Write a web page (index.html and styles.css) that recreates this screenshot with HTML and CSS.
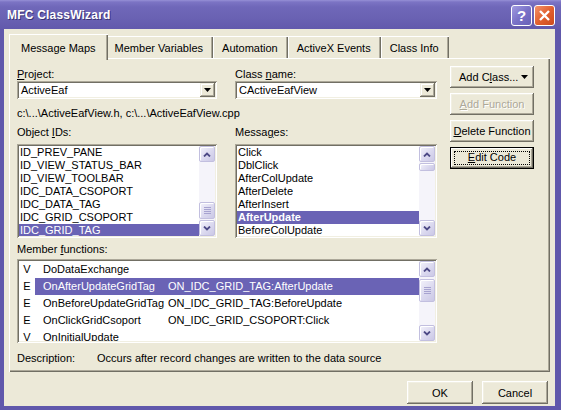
FILE: index.html
```html
<!DOCTYPE html>
<html lang="en">
  <head>
    <meta charset="UTF-8" />
    <title>MFC ClassWizard</title>
    <link rel="stylesheet" href="styles.css">
  </head>
  <body>
    <div class="window">
      <div class="titlebar">
        <span class="title">MFC ClassWizard</span>
        <span class="cap-btns">
          <span class="cap help">?</span>
          <span class="cap close">
            <svg width="21" height="21" viewBox="0 0 21 21"><path d="M6 6 15 15M15 6 6 15" /></svg>
          </span>
        </span>
      </div>

      <div class="frame">
        <div class="client">
          <div class="tabs">
            <span class="tab active">Message Maps</span>
            <span class="tab">Member Variables</span>
            <span class="tab">Automation</span>
            <span class="tab">ActiveX Events</span>
            <span class="tab">Class Info</span>
          </div>

          <div class="panel">
            <div class="main">
              <div class="pair">
                <div>
                  <div class="lbl"><u>P</u>roject:</div>
                  <div class="combo">
                    <span class="combo-text">ActiveEaf</span>
                    <span class="drop"><svg width="7" height="4" viewBox="0 0 7 4"><path d="M0 0h7L3.5 4z" /></svg></span>
                  </div>
                </div>
                <div>
                  <div class="lbl">Class <u>n</u>ame:</div>
                  <div class="combo">
                    <span class="combo-text">CActiveEafView</span>
                    <span class="drop"><svg width="7" height="4" viewBox="0 0 7 4"><path d="M0 0h7L3.5 4z" /></svg></span>
                  </div>
                </div>
              </div>

              <div class="path">c:\...\ActiveEafView.h, c:\...\ActiveEafView.cpp</div>

              <div class="pair lists">
                <div>
                  <div class="lbl">Object <u>I</u>Ds:</div>
                  <div class="listbox">
                    <ul class="items">
                      <li>ID_PREV_PANE</li>
                      <li>ID_VIEW_STATUS_BAR</li>
                      <li>ID_VIEW_TOOLBAR</li>
                      <li>IDC_DATA_CSOPORT</li>
                      <li>IDC_DATA_TAG</li>
                      <li>IDC_GRID_CSOPORT</li>
                      <li class="sel">IDC_GRID_TAG</li>
                    </ul>
                    <div class="vscroll">
                      <span class="sbtn"><svg width="8" height="5" viewBox="0 0 8 5"><path d="M1 4.5 4 1.5 7 4.5" /></svg></span>
                      <span class="track"><span class="thumb grip" style="margin-top:40px;height:17px"></span></span>
                      <span class="sbtn"><svg width="8" height="5" viewBox="0 0 8 5"><path d="M1 0.5 4 3.5 7 0.5" /></svg></span>
                    </div>
                  </div>
                </div>
                <div>
                  <div class="lbl">Messa<u>g</u>es:</div>
                  <div class="listbox">
                    <ul class="items">
                      <li>Click</li>
                      <li>DblClick</li>
                      <li>AfterColUpdate</li>
                      <li>AfterDelete</li>
                      <li>AfterInsert</li>
                      <li class="sel bold">AfterUpdate</li>
                      <li>BeforeColUpdate</li>
                    </ul>
                    <div class="vscroll">
                      <span class="sbtn"><svg width="8" height="5" viewBox="0 0 8 5"><path d="M1 4.5 4 1.5 7 4.5" /></svg></span>
                      <span class="track"><span class="thumb" style="margin-top:1px;height:8px"></span></span>
                      <span class="sbtn"><svg width="8" height="5" viewBox="0 0 8 5"><path d="M1 0.5 4 3.5 7 0.5" /></svg></span>
                    </div>
                  </div>
                </div>
              </div>

              <div class="lbl members-lbl">Member <u>f</u>unctions:</div>
              <div class="listbox members">
                <ul class="items">
                  <li><span class="kind">V</span><span class="fn">DoDataExchange</span><span class="msg"></span></li>
                  <li class="sel"><span class="kind">E</span><span class="fn">OnAfterUpdateGridTag</span><span class="msg">ON_IDC_GRID_TAG:AfterUpdate</span></li>
                  <li><span class="kind">E</span><span class="fn">OnBeforeUpdateGridTag</span><span class="msg">ON_IDC_GRID_TAG:BeforeUpdate</span></li>
                  <li><span class="kind">E</span><span class="fn">OnClickGridCsoport</span><span class="msg">ON_IDC_GRID_CSOPORT:Click</span></li>
                  <li><span class="kind">V</span><span class="fn">OnInitialUpdate</span><span class="msg"></span></li>
                </ul>
                <div class="vscroll">
                  <span class="sbtn"><svg width="8" height="5" viewBox="0 0 8 5"><path d="M1 4.5 4 1.5 7 4.5" /></svg></span>
                  <span class="track"><span class="thumb grip" style="margin-top:2px;height:23px"></span></span>
                  <span class="sbtn"><svg width="8" height="5" viewBox="0 0 8 5"><path d="M1 0.5 4 3.5 7 0.5" /></svg></span>
                </div>
              </div>

              <div class="desc">
                <span class="desc-lbl">Description:</span>
                <span>Occurs after record changes are written to the data source</span>
              </div>
            </div>

            <div class="side">
              <button class="btn addclass"><span>Add C<u>l</u>ass...</span><svg width="7" height="4" viewBox="0 0 7 4"><path d="M0 0h7L3.5 4z" /></svg></button>
              <button class="btn" disabled><u>A</u>dd Function</button>
              <button class="btn"><u>D</u>elete Function</button>
              <button class="btn default"><span class="focus"><u>E</u>dit Code</span></button>
            </div>
          </div>

          <div class="footer">
            <button class="btn wide">OK</button>
            <button class="btn wide">Cancel</button>
          </div>
        </div>
      </div>
    </div>
  </body>
</html>
```

FILE: styles.css
```css
body {
  margin: 0;
  background: #ffffff;
  font-family: "Liberation Sans", Arial, sans-serif;
  font-size: 11px;
  color: #000000;
}

.window {
  width: 561px;
  height: 410px;
  background: #6058ab;
  display: flex;
  flex-direction: column;
}

/* title bar */
.titlebar {
  height: 29px;
  flex: none;
  display: flex;
  align-items: center;
  justify-content: space-between;
  padding: 0 6px 0 7px;
  background: linear-gradient(to bottom, #9690d6 0, #7c74c4 2px, #6f67b9 7px, #6a62b3 60%, #6259ac 100%);
}
.title {
  color: #ffffff;
  font-weight: bold;
  font-size: 12px;
  text-shadow: 1px 1px #3b3474;
  letter-spacing: 0.2px;
}
.cap-btns {
  display: flex;
  gap: 2px;
  margin-top: 1px;
}
.cap {
  width: 19px;
  height: 19px;
  border: 1px solid #ffffff;
  border-radius: 3px;
  display: flex;
  align-items: center;
  justify-content: center;
  color: #ffffff;
  font: bold 15px "Liberation Sans", Arial, sans-serif;
}
.help {
  background: linear-gradient(135deg, #a19be0, #7a72c8 50%, #6961b7);
}
.close {
  background: linear-gradient(135deg, #f3936c, #e2602f 50%, #cc4a1c);
}
.close svg {
  margin: -1px;
}
.close path {
  stroke: #ffffff;
  stroke-width: 2.4;
  fill: none;
}

/* frame and client area */
.frame {
  flex: 1;
  padding: 0 6px 4px 4px;
  display: flex;
}
.client {
  flex: 1;
  background: #ece9d8;
  padding: 0 7px 0 5px;
  display: flex;
  flex-direction: column;
}

/* tabs */
.tabs {
  height: 29px;
  display: flex;
  align-items: flex-end;
  padding-left: 2px;
}
.tab {
  height: 22px;
  box-sizing: border-box;
  padding: 6px 10px 0 9px;
  line-height: 13px;
  box-shadow: inset 1px 1px #ffffff, inset -1px 0 #716f64, inset -2px 0 #aca899;
}
.tab.active {
  height: 26px;
  padding: 8px 12px 0 12px;
  margin: 0 -2px -2px -2px;
  position: relative;
  z-index: 1;
  background: #ece9d8;
}

/* tab page */
.panel {
  height: 314px;
  box-sizing: border-box;
  margin-right: -2px;
  padding: 9px 0 0 8px;
  display: flex;
  gap: 13px;
  box-shadow: inset 1px 1px #ffffff, inset -1px -1px #716f64, inset -2px -2px #aca899;
}
.main {
  width: 420px;
  padding-top: 1px;
}
.pair {
  display: grid;
  grid-template-columns: 200px 202px;
  column-gap: 18px;
}
.lbl {
  line-height: 12px;
  height: 12px;
  white-space: nowrap;
}

/* combo boxes */
.combo {
  height: 18px;
  margin-top: 1px;
  box-sizing: border-box;
  padding: 2px;
  display: flex;
  background: #ffffff;
  box-shadow: inset 1px 1px #aca899, inset -1px -1px #ffffff, inset 2px 2px #716f64, inset -2px -2px #f1efe2;
}
.combo-text {
  flex: 1;
  line-height: 14px;
  padding-left: 2px;
}
.drop {
  width: 15px;
  display: flex;
  align-items: center;
  justify-content: center;
  background: #ece9d8;
  box-shadow: inset -1px -1px #716f64, inset 1px 1px #f1efe2, inset -2px -2px #aca899, inset 2px 2px #ffffff;
}

.path {
  margin-top: 8px;
  line-height: 13px;
}
.lists {
  margin-top: 6px;
}
.lists .lbl {
  margin-bottom: 6px;
}

/* list boxes */
.listbox {
  height: 94px;
  box-sizing: border-box;
  padding: 2px;
  display: flex;
  background: #ffffff;
  box-shadow: inset 1px 1px #aca899, inset -1px -1px #ffffff, inset 2px 2px #716f64, inset -2px -2px #f1efe2;
}
.items {
  flex: 1;
  margin: 0;
  padding: 0;
  list-style: none;
  overflow: hidden;
}
.items li {
  height: 13px;
  line-height: 13px;
  padding-left: 1px;
  white-space: nowrap;
}
.items li.sel {
  background: #6a63b5;
  color: #ffffff;
}
.items li.bold {
  font-weight: bold;
}

/* scroll bars */
.vscroll {
  width: 16px;
  display: flex;
  flex-direction: column;
  background: #f5f4fa;
}
.sbtn,
.thumb {
  box-sizing: border-box;
  border: 1px solid #c2bfdf;
  border-radius: 2px;
  background: linear-gradient(135deg, #f3f2fb, #d9d7ee 60%, #cbc8e6);
  box-shadow: inset 1px 1px #ffffff;
}
.sbtn {
  height: 16px;
  flex: none;
  display: flex;
  align-items: center;
  justify-content: center;
}
.sbtn path {
  fill: none;
  stroke: #4d4a86;
  stroke-width: 1.8;
}
.track {
  flex: 1;
  display: flex;
  flex-direction: column;
}
.thumb {
  display: block;
}
.thumb.grip {
  background:
    repeating-linear-gradient(to bottom, #a7a3d0 0 1px, transparent 1px 2px) center / 7px 7px no-repeat,
    linear-gradient(135deg, #f3f2fb, #d9d7ee 60%, #cbc8e6);
}

/* member functions */
.members-lbl {
  margin-top: 5px;
}
.members {
  height: 84px;
  margin-top: 4px;
}
.members .items li {
  height: 17px;
  line-height: 17px;
  padding: 0;
  display: grid;
  grid-template-columns: 16px 133px 1fr;
}
.members .items li.sel {
  background: linear-gradient(to right, #ffffff 16px, #6a63b5 16px);
}
.kind {
  text-align: center;
  color: #000000;
}
.fn {
  padding-left: 8px;
  overflow: hidden;
}

.desc {
  margin-top: 9px;
  line-height: 12px;
  display: flex;
}
.desc-lbl {
  width: 80px;
}

/* buttons */
.side {
  width: 84px;
  display: flex;
  flex-direction: column;
  gap: 5px;
  margin-top: -1px;
}
.btn {
  height: 22px;
  border: none;
  padding: 0;
  font: 11px "Liberation Sans", Arial, sans-serif;
  color: #000000;
  background: #ece9d8;
  box-shadow: inset -1px -1px #716f64, inset 1px 1px #ffffff, inset -2px -2px #aca899, inset 2px 2px #f1efe2;
}
.btn:disabled {
  color: #aca899;
  text-shadow: 1px 1px #ffffff;
}
.addclass {
  padding: 0 6px 0 9px;
  display: flex;
  align-items: center;
  justify-content: space-between;
}
.addclass svg {
  fill: #000000;
}
.default {
  box-shadow: inset 0 0 0 1px #000000, inset -2px -2px #716f64, inset 2px 2px #ffffff, inset -3px -3px #aca899;
  padding: 4px;
}
.focus {
  display: block;
  height: 14px;
  line-height: 13px;
  box-sizing: border-box;
  outline: 1px dotted #000000;
  outline-offset: -1px;
}

.footer {
  display: flex;
  justify-content: flex-end;
  gap: 9px;
  padding-top: 9px;
}
.wide {
  width: 66px;
  height: 23px;
}
```
